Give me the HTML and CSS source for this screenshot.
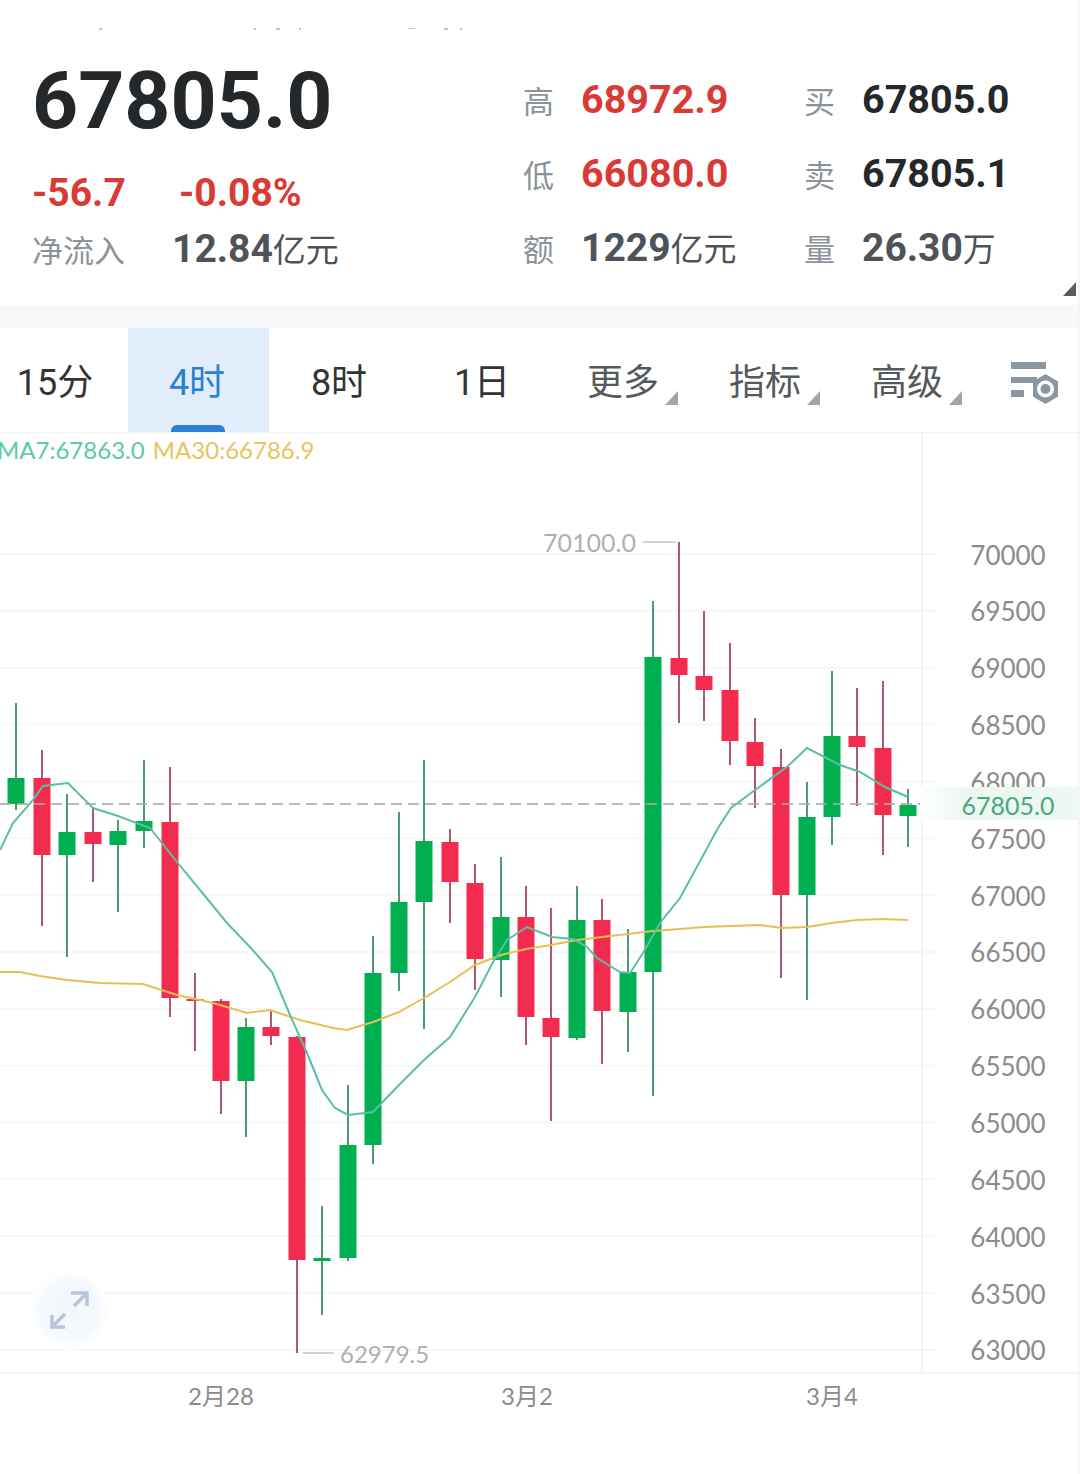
FILE: index.html
```html
<!DOCTYPE html>
<html lang="zh-CN">
<head>
  <meta charset="UTF-8">
  <title>67805.0</title>
  <link rel="stylesheet" href="styles.css">
</head>
<body>
  <div class="page">
    <svg class="specks" width="480" height="31" viewBox="0 0 480 31">
      <rect x="99" y="28" width="3" height="2"/><rect x="254" y="28" width="2" height="2"/>
      <rect x="276" y="28" width="4" height="2"/><rect x="299" y="28" width="2" height="2"/>
      <rect x="408" y="28" width="7" height="1"/><rect x="444" y="28" width="4" height="2"/>
      <rect x="460" y="28" width="2" height="2"/>
    </svg>

    <section class="header">
      <div class="summary">
        <div class="price">67805.0</div>
        <div class="change">
          <span class="change-abs">-56.7</span>
          <span>-0.08%</span>
        </div>
        <div class="inflow">
          <span class="label inflow-label">净流入</span>
          <span class="value muted">12.84<span class="unit">亿元</span></span>
        </div>
      </div>
      <div class="stats">
        <span class="label">高</span><span class="value up">68972.9</span>
        <span class="label">买</span><span class="value">67805.0</span>
        <span class="label">低</span><span class="value up">66080.0</span>
        <span class="label">卖</span><span class="value">67805.1</span>
        <span class="label">额</span><span class="value muted">1229<span class="unit">亿元</span></span>
        <span class="label">量</span><span class="value muted">26.30<span class="unit">万</span></span>
      </div>
      <i class="corner corner-dark"></i>
    </section>

    <div class="divider"></div>

    <nav class="tabs">
      <div class="tab">15分</div>
      <div class="tab active">4时</div>
      <div class="tab">8时</div>
      <div class="tab">1日</div>
      <div class="tab menu">更多<i class="corner"></i></div>
      <div class="tab menu">指标<i class="corner"></i></div>
      <div class="tab menu">高级<i class="corner"></i></div>
      <svg class="settings" width="52" height="46" viewBox="0 0 52 46">
        <rect x="0" y="2" width="35" height="7" fill="#8b96a1"/>
        <rect x="0" y="17" width="26" height="6" fill="#8b96a1"/>
        <rect x="0" y="30" width="13" height="7" fill="#8b96a1"/>
        <path d="M34.500 14L47 21.500V36.500L34.500 44L22 36.500V21.500Z" fill="#8b96a1"/>
        <circle cx="34.500" cy="29" r="8.500" fill="#fff"/>
        <circle cx="34.500" cy="29" r="5" fill="#8b96a1"/>
      </svg>
    </nav>

    <div class="chart">
      <svg id="chart" width="1080" height="941" viewBox="0 433 1080 941"></svg>
      <div class="legend">
        <span class="ma7">MA7:67863.0</span>
        <span class="ma30">MA30:66786.9</span>
      </div>
      <div class="expand">
        <svg width="44" height="44" viewBox="0 0 44 44">
          <path d="M23 5h16v13M39 5L26 18M4 27v12h13M4 39l13-13" fill="none" stroke="#b5c5dc" stroke-width="3.500"/>
        </svg>
      </div>
    </div>

    <div class="dates">
      <span class="date date1">2月28</span>
      <span class="date date2">3月2</span>
      <span class="date date3">3月4</span>
    </div>
  </div>

  <script src="chart.js"></script>
</body>
</html>
```

FILE: styles.css
```css
* { box-sizing: border-box; }
body {
  margin: 0;
  background: #fff;
  font-family: 'Roboto', 'Noto Sans CJK SC', sans-serif;
}
.page {
  width: 1080px;
  height: 1474px;
  overflow: hidden;
  border-right: 2px solid #f4f5f6;
}
.specks {
  display: block;
  fill: #c4c4c4;
}

/* header */
.header {
  position: relative;
  display: flex;
  height: 274px;
  padding: 31px 0 0 32px;
}
.summary { width: 491px; }
.price {
  height: 76px;
  font-size: 80.500px;
  line-height: 78px;
  font-weight: 700;
  color: #25282b;
}
.change {
  display: flex;
  margin-top: 33px;
  font-size: 39px;
  line-height: 44px;
  font-weight: 700;
  color: #d93a35;
}
.change-abs { width: 147px; }
.inflow {
  display: flex;
  align-items: center;
  height: 44px;
  margin-top: 11px;
}
.inflow-label {
  width: 140px;
  font-size: 33px;
}
.stats {
  display: grid;
  grid-template-columns: 58px 223px 58px auto;
  grid-auto-rows: 74px;
  align-items: center;
}
.label {
  font-size: 31px;
  font-family: 'Noto Sans CJK SC', sans-serif;
  color: #8b9298;
}
.value {
  font-size: 39.500px;
  font-weight: 700;
  color: #25282b;
}
.value.up { color: #d93a35; }
.value.muted {
  color: #4d5358;
  font-size: 39px;
}
.unit {
  font-size: 33px;
  font-weight: 400;
  font-family: 'Noto Sans CJK SC', sans-serif;
}
.corner {
  position: absolute;
  right: -13px;
  bottom: 16px;
  width: 13px;
  height: 14px;
  background: #a4a4a4;
  clip-path: polygon(100% 0, 100% 100%, 0 100%);
}
.corner-dark {
  right: 2px;
  bottom: 9px;
  background: #565e66;
}
.divider {
  height: 23px;
  background: #f6f8fa;
}

/* tabs */
.tabs {
  position: relative;
  display: flex;
  height: 105px;
  margin-left: -15px;
  border-bottom: 1px solid #f3f4f5;
}
.tab {
  position: relative;
  width: 143px;
  flex: none;
  padding-right: 3px;
  text-align: center;
  font-size: 36px;
  line-height: 110px;
  color: #333;
}
.tab.active {
  width: 141px;
  background: #e1edfb;
  color: #2b80cf;
}
.tab.active::after {
  content: "";
  position: absolute;
  left: 43px;
  bottom: 0;
  width: 54px;
  height: 7px;
  background: #2b80cf;
  border-radius: 6px 6px 0 0;
}
.tab.menu {
  width: 142px;
  padding-right: 6px;
  color: #55595c;
}
.tab.menu .corner {
  right: 19px;
  bottom: 27px;
}
.settings {
  position: absolute;
  left: 1026px;
  top: 32px;
}

/* chart */
.chart {
  position: relative;
  height: 941px;
  border-bottom: 2px solid #f3f4f5;
}
.chart > svg {
  display: block;
}
.chart text {
  font-family: 'Lato', sans-serif;
  font-size: 26px;
  fill: #8c8c8c;
}
.chart text.extreme {
  font-size: 25px;
  fill: #b0b0b0;
}
.chart text.extreme.low {
  font-size: 24px;
}
.chart text.last {
  font-size: 25px;
  fill: #48a97c;
}
.legend {
  position: absolute;
  left: -3px;
  top: 2px;
  font-family: 'Lato', sans-serif;
  font-size: 24px;
  line-height: 30px;
  white-space: nowrap;
}
.ma7 { color: #5cc9ab; margin-right: 2px; }
.ma30 { color: #e8c45c; }
.expand {
  position: absolute;
  left: 30px;
  top: 837px;
  width: 80px;
  height: 80px;
  padding: 18px;
  border-radius: 50%;
  background: radial-gradient(circle, #f0f6fc 0%, #f5f9fd 50%, #fff 72%);
}
.expand svg { display: block; }

/* date axis */
.dates {
  display: flex;
  padding-top: 7px;
  font-family: 'Lato', 'Noto Sans CJK SC', sans-serif;
  font-size: 24px;
  line-height: 30px;
  color: #8c8c8c;
}
.date { text-align: center; width: 80px; }
.date1 { margin-left: 181px; }
.date2 { margin-left: 226px; }
.date3 { margin-left: 225px; }
```

FILE: chart.js
```js
// x, up?, high, bodyTop, bodyBottom, low (all in page pixels)
const candles = [
  [16, 1, 703, 778, 804, 810], [42, 0, 750, 778, 855, 926], [67, 1, 794, 832, 855, 957],
  [93, 0, 808, 832, 844, 882], [118, 1, 820, 831, 845, 912], [144, 1, 760, 821, 831, 848],
  [170, 0, 767, 822, 998, 1017], [195, 0, 973, 999, 1001, 1051], [221, 0, 999, 1001, 1081, 1114],
  [246, 1, 1018, 1027, 1081, 1137], [271, 0, 1010, 1027, 1036, 1045], [297, 0, 1036, 1037, 1260, 1353],
  [322, 1, 1206, 1258, 1261, 1315], [348, 1, 1085, 1145, 1258, 1261], [373, 1, 936, 973, 1145, 1164],
  [399, 1, 812, 902, 973, 991], [424, 1, 760, 841, 902, 1029], [450, 0, 829, 842, 882, 923],
  [475, 0, 864, 883, 959, 990], [501, 1, 857, 917, 960, 997], [526, 0, 886, 917, 1017, 1045],
  [551, 0, 908, 1018, 1037, 1121], [577, 1, 886, 920, 1038, 1040], [602, 0, 899, 920, 1011, 1064],
  [628, 1, 929, 972, 1012, 1052], [653, 1, 601, 657, 972, 1096], [679, 0, 542, 658, 675, 723],
  [704, 0, 611, 676, 690, 721], [730, 0, 643, 690, 741, 765], [755, 0, 718, 742, 766, 808],
  [781, 0, 749, 767, 895, 978], [807, 1, 782, 817, 895, 1000], [832, 1, 671, 736, 817, 845],
  [857, 0, 688, 736, 747, 806], [883, 0, 681, 748, 815, 855], [908, 1, 789, 805, 816, 847]
];

const ma7 = [
  [0, 850], [13, 823], [33, 800], [43, 786], [68, 783], [93, 808], [118, 816], [150, 828], [177, 862],
  [200, 890], [227, 923], [250, 947], [272, 972], [290, 1015], [307, 1053], [322, 1090], [335, 1108],
  [348, 1115], [373, 1112], [400, 1084], [424, 1060], [450, 1037], [475, 997], [493, 962], [507, 940],
  [527, 927], [552, 937], [573, 939], [587, 947], [597, 958], [620, 972], [630, 973], [643, 953],
  [660, 923], [680, 898], [718, 828], [731, 808], [755, 790], [788, 766], [807, 748], [840, 765],
  [860, 772], [885, 787], [908, 797]
];

const ma30 = [
  [0, 972], [20, 972], [40, 976], [67, 980], [100, 983], [143, 984], [177, 995], [213, 1003],
  [247, 1013], [270, 1010], [300, 1020], [333, 1028], [347, 1030], [373, 1022], [399, 1012],
  [424, 998], [450, 982], [475, 965], [501, 955], [526, 949], [551, 945], [577, 940], [602, 937],
  [628, 934], [653, 931], [680, 929], [704, 927], [730, 926], [760, 925], [781, 928], [807, 927],
  [832, 923], [857, 920], [883, 919], [908, 920]
];

const levels = [70000, 69500, 69000, 68500, 68000, 67500, 67000, 66500, 66000, 65500, 65000, 64500, 64000, 63500, 63000];

function points(line) {
  return line.map(p => p.join(",")).join(" ");
}

function drawChart() {
  let out = `<defs><linearGradient id="band" x1="0" x2="1" y1="0" y2="0">
    <stop offset="0" stop-color="#fff"/><stop offset=".3" stop-color="#ecf7f1"/><stop offset="1" stop-color="#eef8f3"/>
  </linearGradient></defs>`;

  levels.forEach((level, i) => {
    const y = 554 + i * 56.85;
    out += `<line x1="0" x2="935" y1="${y}" y2="${y}" stroke="#f6f7f8" stroke-width="2"/>`;
    out += `<text x="1008" y="${y + 10.5}" text-anchor="middle">${level}</text>`;
  });
  out += `<line x1="922" x2="922" y1="433" y2="1374" stroke="#f3f4f5" stroke-width="2"/>`;

  out += `<rect x="918" y="787" width="162" height="33" fill="url(#band)"/>`;

  candles.forEach(([x, up, high, top, bottom, low]) => {
    const body = up ? "#00b050" : "#f32c4f";
    const wick = up ? "#4e9a72" : "#b0566e";
    out += `<line x1="${x}" x2="${x}" y1="${high}" y2="${low}" stroke="${wick}" stroke-width="2"/>`;
    out += `<rect x="${x - 8.5}" y="${top}" width="17" height="${bottom - top}" fill="${body}"/>`;
  });

  out += `<polyline points="${points(ma30)}" fill="none" stroke="#e8bf55" stroke-width="2"/>`;
  out += `<polyline points="${points(ma7)}" fill="none" stroke="#5cbfa5" stroke-width="2"/>`;

  out += `<line x1="0" x2="920" y1="804" y2="804" stroke="#a9a9a9" stroke-width="2" stroke-dasharray="11 6" opacity=".8"/>`;
  out += `<text class="last" x="1008" y="814.500" text-anchor="middle">67805.0</text>`;

  // high and low marks
  out += `<line x1="643" x2="676" y1="542" y2="542" stroke="#c4c4c4" stroke-width="1.500"/>`;
  out += `<text class="extreme" x="543" y="552">70100.0</text>`;
  out += `<line x1="303" x2="334" y1="1353" y2="1353" stroke="#c4c4c4" stroke-width="1.500"/>`;
  out += `<text class="extreme low" x="340" y="1363">62979.5</text>`;

  document.getElementById("chart").innerHTML = out;
}

drawChart();
```
